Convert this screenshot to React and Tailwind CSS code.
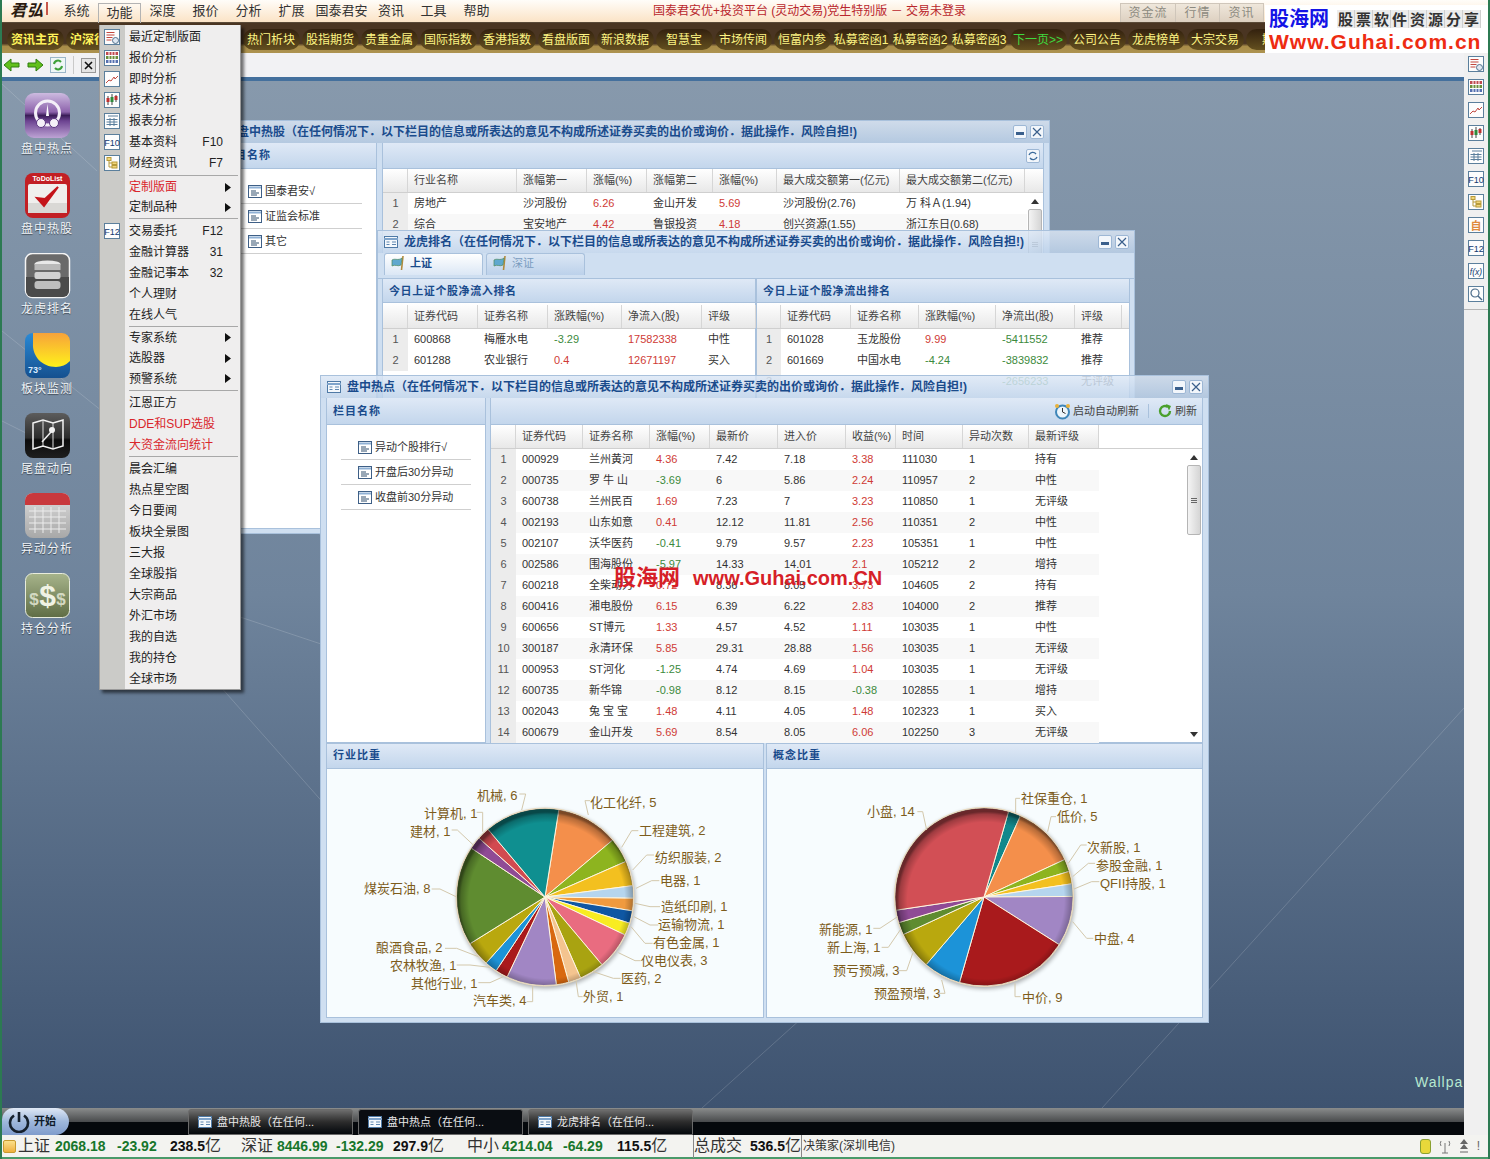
import React from 'react';

const navItems = ['资讯主页', '沪深行情', '', '', '热门析块', '股指期货', '贵重金属', '国际指数', '香港指数', '看盘版面', '新浪数据', '智慧宝', '市场传闻', '恒富内参', '私募密函1', '私募密函2', '私募密函3', '下一页>>', '公司公告', '龙虎榜单', '大宗交易', '期货'];

const hotRows = [
  ['000929', '兰州黄河', '4.36', '7.42', '7.18', '3.38', '111030', '1', '持有'],
  ['000735', '罗 牛 山', '-3.69', '6', '5.86', '2.24', '110957', '2', '中性'],
  ['600738', '兰州民百', '1.69', '7.23', '7', '3.23', '110850', '1', '无评级'],
  ['002193', '山东如意', '0.41', '12.12', '11.81', '2.56', '110351', '2', '中性'],
  ['002107', '沃华医药', '-0.41', '9.79', '9.57', '2.23', '105351', '1', '中性'],
  ['002586', '围海股份', '-5.97', '14.33', '14.01', '2.1', '105212', '2', '增持'],
  ['600218', '全柴动力', '0.72', '8.36', '8.05', '3.73', '104605', '2', '持有'],
  ['600416', '湘电股份', '6.15', '6.39', '6.22', '2.83', '104000', '2', '推荐'],
  ['600656', 'ST博元', '1.33', '4.57', '4.52', '1.11', '103035', '1', '中性'],
  ['300187', '永清环保', '5.85', '29.31', '28.88', '1.56', '103035', '1', '无评级'],
  ['000953', 'ST河化', '-1.25', '4.74', '4.69', '1.04', '103035', '1', '无评级'],
  ['600735', '新华锦', '-0.98', '8.12', '8.15', '-0.38', '102855', '1', '增持'],
  ['002043', '兔 宝 宝', '1.48', '4.11', '4.05', '1.48', '102323', '1', '买入'],
  ['600679', '金山开发', '5.69', '8.54', '8.05', '6.06', '102250', '3', '无评级'],
];

// 行业比重: value, colour, label, label x/y (page), leader points (zoom coords)
const industry = [
  [5, '#f48f4b', '化工化纤, 5', 590, 803, [775, 135, 765, 92, 780, 92]],
  [2, '#8db41f', '工程建筑, 2', 639, 831, [875, 232, 905, 182, 925, 182]],
  [2, '#f3c01f', '纺织服装, 2', 655, 858, [908, 300, 950, 255, 972, 255]],
  [1, '#b5d5ee', '电器, 1', 660, 881, [918, 355, 965, 332, 988, 332]],
  [1, '#ef9a3f', '造纸印刷, 1', 661, 907, [915, 400, 960, 410, 990, 410]],
  [1, '#0f57a3', '运输物流, 1', 658, 925, [912, 440, 960, 465, 985, 465]],
  [1, '#f8ec22', '有色金属, 1', 653, 943, [903, 470, 945, 520, 968, 520]],
  [3, '#e96c80', '仪电仪表, 3', 641, 961, [865, 548, 915, 572, 932, 572]],
  [2, '#a9a311', '医药, 2', 621, 979, [790, 605, 850, 625, 872, 625]],
  [1, '#f4c48f', '外贸, 1', 583, 997, [738, 632, 745, 680, 758, 680]],
  [1, '#d8680f', '', 0, 0, null],
  [4, '#a186c4', '汽车类, 4', 473, 1001, [608, 648, 608, 695, 590, 695]],
  [1, '#a91a1c', '其他行业, 1', 411, 984, [520, 620, 480, 638, 445, 638]],
  [1, '#1c93d8', '农林牧渔, 1', 390, 966, [480, 592, 420, 585, 380, 585]],
  [2, '#b9a80e', '酿酒食品, 2', 376, 948, [445, 560, 380, 535, 345, 535]],
  [8, '#5f8c30', '煤炭石油, 8', 364, 889, [378, 380, 330, 357, 305, 357]],
  [1, '#8f4b95', '建材, 1', 410, 832, [430, 225, 382, 180, 365, 180]],
  [1, '#d24a50', '计算机, 1', 424, 814, [458, 185, 458, 127, 440, 127]],
  [6, '#0f8f90', '机械, 6', 477, 796, [575, 120, 587, 72, 568, 72]],
];

const concept = [
  [1, '#11888c', '社保重仓, 1', 1021, 799, [737, 130, 737, 85, 750, 85]],
  [5, '#f48f4b', '低价, 5', 1057, 817, [833, 185, 843, 140, 858, 140]],
  [1, '#8db41f', '次新股, 1', 1087, 848, [895, 280, 932, 225, 950, 225]],
  [1, '#f3c01f', '参股金融, 1', 1096, 866, [908, 320, 955, 280, 975, 280]],
  [1, '#b5d5ee', 'QFII持股, 1', 1100, 884, [912, 357, 965, 335, 988, 335]],
  [4, '#a186c4', '中盘, 4', 1094, 939, [908, 455, 950, 505, 970, 505]],
  [9, '#a91a1c', '中价, 9', 1022, 998, [735, 640, 735, 680, 752, 680]],
  [3, '#1c93d8', '预盈预增, 3', 874, 994, [515, 630, 525, 670, 508, 670]],
  [3, '#b9a80e', '预亏预减, 3', 833, 971, [428, 550, 410, 602, 385, 602]],
  [1, '#5f8c30', '新上海, 1', 827, 948, [392, 478, 355, 532, 335, 532]],
  [1, '#8f4b95', '新能源, 1', 819, 930, [383, 440, 330, 475, 310, 475]],
  [14, '#d24f55', '小盘, 14', 867, 812, [470, 180, 458, 125, 442, 125]],
];

const Pie = ({ id, viewBox, cx, cy, r, start, data, ox, oy }) => {
  const total = data.reduce((s, d) => s + d[0], 0);
  let a = start;
  const pt = (deg) => [cx + r * Math.sin((deg * Math.PI) / 180), cy - r * Math.cos((deg * Math.PI) / 180)];
  return (
    <svg viewBox={viewBox} className="block w-full h-full">
      <defs>
        <radialGradient id={id} cx="0.51" cy="0.52" r="0.5">
          <stop offset="0.88" stopColor="#000" stopOpacity="0" />
          <stop offset="0.97" stopColor="#000" stopOpacity="0.25" />
          <stop offset="1" stopColor="#000" stopOpacity="0.5" />
        </radialGradient>
        <filter id={id + 'b'} x="-20%" y="-20%" width="140%" height="140%">
          <feGaussianBlur stdDeviation="2" />
        </filter>
      </defs>
      <circle cx={cx + 1} cy={cy + 2} r={r + 1} fill="#000" opacity="0.3" filter={`url(#${id}b)`} />
      {data.map((d, i) => {
        const sweep = (d[0] / total) * 360;
        const p1 = pt(a);
        const p2 = pt(a + sweep);
        const path = `M${cx} ${cy}L${p1[0]} ${p1[1]}A${r} ${r} 0 ${sweep > 180 ? 1 : 0} 1 ${p2[0]} ${p2[1]}Z`;
        a += sweep;
        return <path key={i} d={path} fill={d[1]} stroke="#fff6df" strokeWidth="1" />;
      })}
      <circle cx={cx} cy={cy} r={r} fill={`url(#${id})`} />
      <circle cx={cx} cy={cy} r={r + 0.5} fill="none" stroke="#ead9bb" strokeWidth="1" />
      {data.filter((d) => d[5]).map((d) => (
        <polyline
          key={d[2]}
          points={d[5].map((v, i) => (i % 2 ? oy + v / 3 : ox + v / 3)).join(' ')}
          fill="none"
          stroke="#d3c8ac"
          strokeWidth="1"
        />
      ))}
      {data.filter((d) => d[2]).map((d) => (
        <text key={d[2]} x={d[3]} y={d[4] + 1} fontSize="13" fill="#7d5c1c" dominantBaseline="middle">{d[2]}</text>
      ))}
    </svg>
  );
};

const BoxIcon = ({ kind }) => (
  <svg width="16" height="16" viewBox="0 0 16 16" className="shrink-0">
    <rect x="0.5" y="0.5" width="15" height="15" fill="#fdfdfd" stroke="#5b7f9c" />
    {kind === 'recent' && (
      <g>
        <path d="M2.5 3.5h8M2.5 6h8M2.5 8.5h6M2.5 11h5" stroke="#c2483f" />
        <circle cx="11.5" cy="11.5" r="3" fill="#dfe8f2" stroke="#52708c" />
      </g>
    )}
    {kind === 'grid' && (
      <g>
        <rect x="2" y="2" width="12" height="3" fill="#c04a50" />
        <rect x="2" y="6" width="12" height="3" fill="#6a8e3a" />
        <rect x="2" y="10" width="12" height="3" fill="#5570b0" />
        <path d="M5 2v11M8 2v11M11 2v11" stroke="#fff" />
      </g>
    )}
    {kind === 'line' && <path d="M2 12l3-3 2 1 3-4 1 2 3-3" stroke="#c2483f" fill="none" />}
    {kind === 'candle' && (
      <g>
        <path d="M4 4v9M8 2v11M12 3v7" stroke="#444" />
        <rect x="2.5" y="6" width="3" height="4" fill="#c03030" />
        <rect x="6.5" y="5" width="3" height="5" fill="#2f8a3a" />
        <rect x="10.5" y="4" width="3" height="4" fill="#c03030" />
      </g>
    )}
    {kind === 'report' && <path d="M2.5 6.5h11M2.5 9h11M2.5 11.5h11M6 5v8M10 5v8M4 3h10" stroke="#5b7f9c" fill="none" />}
    {kind === 'tree' && (
      <g>
        <rect x="3" y="2.5" width="4" height="3" fill="#f2d67a" stroke="#b79a3a" />
        <rect x="8" y="7" width="5" height="2.5" fill="#f2d67a" stroke="#b79a3a" />
        <rect x="8" y="10.5" width="5" height="2.5" fill="#f2d67a" stroke="#b79a3a" />
        <path d="M5 5.5v6.5h3M5 8h3" stroke="#b79a3a" fill="none" />
      </g>
    )}
    {kind === 'self' && <text x="8" y="12.5" textAnchor="middle" fontSize="11" fontWeight="700" fill="#e08a3c">自</text>}
    {kind === 'f10' && <text x="8" y="11.5" textAnchor="middle" fontSize="9" fill="#123a70">F10</text>}
    {kind === 'f12' && <text x="8" y="11.5" textAnchor="middle" fontSize="9" fill="#123a70">F12</text>}
    {kind === 'fx' && <text x="8" y="11.5" textAnchor="middle" fontSize="8.5" fontStyle="italic" fill="#123a70">f(x)</text>}
    {kind === 'search' && (
      <g>
        <circle cx="7" cy="7" r="4" fill="none" stroke="#4a6a88" strokeWidth="1.2" />
        <path d="M10 10l4 4" stroke="#4a6a88" strokeWidth="1.5" />
      </g>
    )}
  </svg>
);

const Arrow = ({ flip }) => (
  <svg width="17" height="14" viewBox="0 0 17 14">
    <path
      d={flip ? 'M1 5h8V1l7 6-7 6V9H1z' : 'M16 5H8V1L1 7l7 6V9h8z'}
      fill="#62c01c"
      stroke="#2f7d10"
    />
  </svg>
);

const WinIcon = () => (
  <svg width="14" height="12" viewBox="0 0 14 12" className="shrink-0">
    <rect x="0.5" y="0.5" width="13" height="11" fill="#f4f8fc" stroke="#4f7aa6" />
    <path d="M0 3h14" stroke="#7fa4cb" strokeWidth="2" />
    <path d="M2.5 6h3M8 6h4M2.5 8.5h3M8 8.5h4" stroke="#5f87b0" />
  </svg>
);

const ListIcon = () => (
  <svg width="14" height="13" viewBox="0 0 14 13" className="shrink-0">
    <rect x="0.5" y="0.5" width="13" height="12" fill="#fff" stroke="#3e5f86" />
    <path d="M1 2.5h12" stroke="#8fb0d4" strokeWidth="2" />
    <path d="M3 6h5M3 8h8M3 10h6" stroke="#33506f" />
  </svg>
);

const Flag = () => (
  <svg width="16" height="16" viewBox="0 0 16 16" className="shrink-0">
    <path d="M12 1l-1.5 14" stroke="#b08a3c" strokeWidth="1.6" />
    <path d="M1 5c3-2 6 1 10-2l-1 7c-3 2-6-1-9 1z" fill="#5fa8cf" stroke="#4f8a5a" strokeWidth="0.7" />
  </svg>
);

const WinButtons = () => (
  <div className="flex gap-[3px]">
    <div className="w-[14px] h-[14px] rounded-[2px] border border-[#9db7d5] bg-[#f2f6fb] flex items-end justify-center pb-[3px]">
      <div className="w-[8px] h-[3px] bg-[#3a5f8c]" />
    </div>
    <div className="w-[14px] h-[14px] rounded-[2px] border border-[#9db7d5] bg-[#f2f6fb] flex items-center justify-center">
      <svg width="10" height="10" viewBox="0 0 10 10"><path d="M1 1l8 8M9 1L1 9" stroke="#3a5f8c" strokeWidth="1.2" /></svg>
    </div>
  </div>
);

const TitleBar = ({ title }) => (
  <div className="h-[22px] shrink-0 flex items-center pl-[6px] pr-[5px] bg-gradient-to-b from-[#dce7f5]/85 to-[#bdd2ea]/85">
    <WinIcon />
    <div className="ml-[6px] pb-px text-[12px] font-bold text-[#1a4b8c] whitespace-nowrap overflow-hidden flex-1">{title}</div>
    <WinButtons />
  </div>
);

const panelHead = 'bg-gradient-to-b from-[#dfe9f6] to-[#c3d6ec] border-b border-[#a9c1dc]';

const ListPanel = ({ items, headH }) => (
  <div className="flex flex-col bg-white border border-[#a9c1dc] border-t-0 h-full">
    <div className={`${headH} shrink-0 flex items-center pl-[6px] text-[11px] font-bold text-[#1a4b8c] tracking-[1px] ${panelHead}`}>栏目名称</div>
    <div className="flex flex-col pt-[10px] mx-[14px]">
      {items.map((t) => (
        <div key={t} className="h-[25px] shrink-0 flex items-center gap-[3px] pl-[17px] border-b border-[#cfcfcf] text-[11px] text-[#333] whitespace-nowrap">
          <ListIcon />
          <span>{t}</span>
        </div>
      ))}
    </div>
  </div>
);

const th = 'flex items-center pl-[6px] border-r border-[#d6d6d6] text-[11px] text-[#444] whitespace-nowrap overflow-hidden';
const td = 'flex items-center pl-[6px] text-[11px] whitespace-nowrap overflow-hidden';
const headBg = 'bg-gradient-to-b from-[#ffffff] to-[#e8e8e8] border-b border-[#cfcfcf]';

const pct = (v) => (v.startsWith('-') ? 'text-[#3c8a3c]' : 'text-[#cf3b36]');

const ScrollBar = ({ thumb = 'h-[70px]' }) => (
  <div className="w-[16px] shrink-0 flex flex-col items-center pt-[6px]">
    <svg width="8" height="5" viewBox="0 0 8 5"><path d="M4 0l4 5H0z" fill="#333" /></svg>
    <div className={`mt-[5px] w-[14px] ${thumb} rounded-[2px] border border-[#b5b5b5] bg-gradient-to-r from-[#f4f4f4] to-[#d5d5d5] flex flex-col items-center justify-center gap-[1px]`}>
      <div className="w-[6px] h-px bg-[#666]" />
      <div className="w-[6px] h-px bg-[#666]" />
      <div className="w-[6px] h-px bg-[#666]" />
    </div>
    <div className="flex-1" />
    <svg width="8" height="5" viewBox="0 0 8 5" className="mb-[5px]"><path d="M4 5l4-5H0z" fill="#333" /></svg>
  </div>
);

const IdxCell = ({ n }) => (
  <div className="flex items-center justify-center bg-[#ececec] text-[11px] text-[#555]">{n}</div>
);

const HotWindow = () => (
  <div className="absolute left-[320px] top-[375px] w-[889px] h-[648px] flex flex-col border border-[#a9c1dc] z-30">
    <TitleBar title="盘中热点（在任何情况下．以下栏目的信息或所表达的意见不构成所述证券买卖的出价或询价．据此操作．风险自担!)" />
    <div className="h-[345px] shrink-0 flex gap-[4px] px-[5px] bg-[#cfdff1]">
      <div className="w-[160px] shrink-0">
        <ListPanel headH="h-[27px]" items={['异动个股排行√', '开盘后30分异动', '收盘前30分异动']} />
      </div>
      <div className="flex-1 flex flex-col bg-white border border-[#a9c1dc] border-t-0">
        <div className={`h-[27px] shrink-0 flex items-center justify-end pr-[5px] text-[11px] text-[#444] ${panelHead}`}>
          <svg width="17" height="17" viewBox="0 0 17 17">
            <circle cx="8.5" cy="9" r="6.5" fill="#eef6fb" stroke="#3f86b8" strokeWidth="2" />
            <path d="M8.5 5v4l3 1.5" stroke="#333" fill="none" />
            <circle cx="3" cy="3" r="2" fill="#e8b23c" />
            <circle cx="14" cy="3" r="2" fill="#e8b23c" />
          </svg>
          <span className="ml-[2px]">启动自动刷新</span>
          <div className="w-px h-[14px] bg-[#a9c1dc] mx-[9px]" />
          <svg width="14" height="14" viewBox="0 0 14 14">
            <path d="M12 7a5 5 0 1 1-2-4" fill="none" stroke="#4aa02c" strokeWidth="2.4" />
            <path d="M8 0l5 2-2 4.5z" fill="#4aa02c" />
          </svg>
          <span className="ml-[3px]">刷新</span>
        </div>
        <div className="flex-1 flex min-h-0">
          <div className="w-[608px] shrink-0 flex flex-col">
            <div className={`h-[24px] shrink-0 grid grid-cols-[25px_67px_67px_60px_68px_68px_50px_67px_66px_70px] ${headBg}`}>
              <div className={th} />
              {['证券代码', '证券名称', '涨幅(%)', '最新价', '进入价', '收益(%)', '时间', '异动次数', '最新评级'].map((h) => (
                <div key={h} className={th}>{h}</div>
              ))}
            </div>
            {hotRows.map((r, i) => (
              <div key={r[0] + i} className={`h-[21px] shrink-0 grid grid-cols-[25px_67px_67px_60px_68px_68px_50px_67px_66px_70px] text-[#333] ${i % 2 ? 'bg-[#f8f8f8]' : 'bg-white'}`}>
                <IdxCell n={i + 1} />
                <div className={td}>{r[0]}</div>
                <div className={td}>{r[1]}</div>
                <div className={`${td} ${pct(r[2])}`}>{r[2]}</div>
                <div className={td}>{r[3]}</div>
                <div className={td}>{r[4]}</div>
                <div className={`${td} ${pct(r[5])}`}>{r[5]}</div>
                <div className={td}>{r[6]}</div>
                <div className={td}>{r[7]}</div>
                <div className={td}>{r[8]}</div>
              </div>
            ))}
          </div>
          <div className="flex-1 flex flex-col">
            <div className="h-[24px] shrink-0 border-b border-[#cfcfcf]" />
            <div className="flex-1 flex justify-end min-h-0">
              <ScrollBar />
            </div>
          </div>
        </div>
      </div>
    </div>
    <div className="flex-1 flex gap-[2px] px-[5px] pb-[4px] min-h-0 bg-[#cfdff1]">
      <div className="w-[438px] shrink-0 flex flex-col border border-[#a9c1dc]">
        <div className={`h-[25px] shrink-0 flex items-center pb-[2px] pl-[6px] text-[11px] font-bold text-[#1a4b8c] tracking-[1px] ${panelHead}`}>行业比重</div>
        <div className="flex-1 min-h-0 bg-[#f7fcfe]">
          <Pie id="pieA" viewBox="327 769 436 248" cx={545} cy={897} r={88.5} start={9} data={industry} ox={330} oy={770} />
        </div>
      </div>
      <div className="flex-1 flex flex-col border border-[#a9c1dc]">
        <div className={`h-[25px] shrink-0 flex items-center pb-[2px] pl-[6px] text-[11px] font-bold text-[#1a4b8c] tracking-[1px] ${panelHead}`}>概念比重</div>
        <div className="flex-1 min-h-0 bg-[#f7fcfe]">
          <Pie id="pieB" viewBox="767 769 435 248" cx={984} cy={897} r={89} start={16} data={concept} ox={770} oy={770} />
        </div>
      </div>
    </div>
  </div>
);

const stockRows = [
  ['房地产', '沙河股份', '6.26', '金山开发', '5.69', '沙河股份(2.76)', '万 科Ａ(1.94)'],
  ['综合', '宝安地产', '4.42', '鲁银投资', '4.18', '创兴资源(1.55)', '浙江东日(0.68)'],
];

const StockWindow = () => (
  <div className="absolute left-[210px] top-[120px] w-[840px] h-[414px] flex flex-col border border-[#a9c1dc] z-10">
    <TitleBar title="盘中热股（在任何情况下．以下栏目的信息或所表达的意见不构成所述证券买卖的出价或询价．据此操作．风险自担!)" />
    <div className="flex-1 flex gap-[5px] px-[5px] pb-[4px] min-h-0 bg-[#cfdff1]">
      <div className="w-[161px] shrink-0">
        <ListPanel headH="h-[26px]" items={['国泰君安√', '证监会标准', '其它']} />
      </div>
      <div className="flex-1 flex flex-col bg-white border border-[#a9c1dc] border-t-0">
        <div className={`h-[26px] shrink-0 flex items-center justify-end pr-[3px] ${panelHead}`}>
          <div className="w-[14px] h-[14px] rounded-[2px] border border-[#9db7d5] bg-[#f2f6fb] flex items-center justify-center">
            <svg width="10" height="10" viewBox="0 0 10 10"><path d="M1 4a4 4 0 0 1 7-1M9 6a4 4 0 0 1-7 1" fill="none" stroke="#3a6a9c" strokeWidth="1.3" /></svg>
          </div>
        </div>
        <div className={`h-[24px] shrink-0 grid grid-cols-[25px_109px_70px_60px_66px_64px_123px_125px_1fr] ${headBg}`}>
          <div className={th} />
          {['行业名称', '涨幅第一', '涨幅(%)', '涨幅第二', '涨幅(%)', '最大成交额第一(亿元)', '最大成交额第二(亿元)'].map((h, i) => (
            <div key={i} className={th}>{h}</div>
          ))}
        </div>
        <div className="flex-1 flex min-h-0">
          <div className="flex-1 flex flex-col">
            {stockRows.map((r, i) => (
              <div key={i} className={`h-[21px] shrink-0 grid grid-cols-[25px_109px_70px_60px_66px_64px_123px_125px] text-[#333] ${i % 2 ? 'bg-[#f8f8f8]' : 'bg-white'}`}>
                <IdxCell n={i + 1} />
                <div className={td}>{r[0]}</div>
                <div className={td}>{r[1]}</div>
                <div className={`${td} text-[#cf3b36]`}>{r[2]}</div>
                <div className={td}>{r[3]}</div>
                <div className={`${td} text-[#cf3b36]`}>{r[4]}</div>
                <div className={td}>{r[5]}</div>
                <div className={td}>{r[6]}</div>
              </div>
            ))}
          </div>
          <ScrollBar />
        </div>
      </div>
    </div>
  </div>
);

const dragonLeft = [
  ['600868', '梅雁水电', '-3.29', '17582338', '中性'],
  ['601288', '农业银行', '0.4', '12671197', '买入'],
];
const dragonRight = [
  ['601028', '玉龙股份', '9.99', '-5411552', '推荐'],
  ['601669', '中国水电', '-4.24', '-3839832', '推荐'],
  ['', '', '', '-2656233', '无评级'],
];

const DragonTable = ({ head, col, rows, cols }) => (
  <div className="flex-1 flex flex-col bg-white border border-[#a9c1dc] border-t-0 min-w-0">
    <div className={`h-[24px] shrink-0 flex items-center pl-[6px] pt-[2px] text-[11px] font-bold text-[#1a4b8c] tracking-[0.6px] ${panelHead}`}>{head}</div>
    <div className={`h-[26px] shrink-0 grid ${cols} pt-[2px] ${headBg}`}>
      <div className={th} />
      {['证券代码', '证券名称', '涨跌幅(%)', col, '评级'].map((h) => (
        <div key={h} className={th}>{h}</div>
      ))}
    </div>
    {rows.map((r, i) => (
      <div key={i} className={`h-[21px] shrink-0 grid ${cols} text-[#333]`}>
        <IdxCell n={i + 1} />
        <div className={td}>{r[0]}</div>
        <div className={td}>{r[1]}</div>
        <div className={`${td} ${pct(r[2])}`}>{r[2]}</div>
        <div className={`${td} ${pct(r[3])}`}>{r[3]}</div>
        <div className={td}>{r[4]}</div>
      </div>
    ))}
  </div>
);

const DragonWindow = () => (
  <div className="absolute left-[377px] top-[230px] w-[758px] h-[300px] flex flex-col border border-[#a9c1dc] z-20">
    <TitleBar title="龙虎排名（在任何情况下．以下栏目的信息或所表达的意见不构成所述证券买卖的出价或询价．据此操作．风险自担!)" />
    <div className="h-[26px] shrink-0 flex items-start gap-[3px] pl-[6px] bg-[#cfdff1] border-b border-[#a9c1dc]">
      <div className="w-[99px] h-[22px] flex items-center gap-[3px] pl-[6px] pb-[3px] rounded-t-[3px] border border-b-0 border-[#a9c1dc] bg-gradient-to-b from-[#ffffff] to-[#dbe7f5] text-[11px] font-bold text-[#1a4b8c]">
        <Flag />上证
      </div>
      <div className="w-[99px] h-[22px] flex items-center gap-[3px] pl-[6px] pb-[3px] rounded-t-[3px] border border-b-0 border-[#a9c1dc] bg-gradient-to-b from-[#dbe7f5] to-[#bcd1ea] text-[11px] text-[#7a9cc0]">
        <Flag />深证
      </div>
    </div>
    <div className="flex-1 flex px-[4px] min-h-0 bg-[#cfdff1]">
      <DragonTable head="今日上证个股净流入排名" col="净流入(股)" rows={dragonLeft} cols="grid-cols-[25px_70px_70px_74px_80px_54px]" />
      <DragonTable head="今日上证个股净流出排名" col="净流出(股)" rows={dragonRight} cols="grid-cols-[24px_70px_68px_77px_79px_47px]" />
    </div>
  </div>
);

const Sep = ({ h }) => (
  <div className={`${h} flex items-center pl-[29px] pr-[2px]`}>
    <div className="h-px w-full bg-[#a8a8a8]" />
  </div>
);

const MenuRow = ({ text, icon, keys, sub, red, h = 'h-[21px]' }) => (
  <div className={`${h} flex items-center ${red ? 'text-[#d9262c]' : 'text-[#222]'}`}>
    <div className="w-[25px] shrink-0 pl-[4px]">{icon && <BoxIcon kind={icon} />}</div>
    <span className="pl-[4px] whitespace-nowrap">{text}</span>
    <span className="ml-auto pr-[17px]">{keys}</span>
    {sub && (
      <svg width="6" height="9" viewBox="0 0 6 9" className="mr-[9px]"><path d="M0 0l6 4.5L0 9z" fill="#111" /></svg>
    )}
  </div>
);

const FuncMenu = () => (
  <div className="absolute left-[99px] top-[25px] w-[142px] h-[665px] z-40 pt-px text-[12px] border border-[#9a9a9a] border-t-0 bg-[linear-gradient(90deg,#cbcbc8_25px,#efeeee_25px)] shadow-[3px_3px_3px_rgba(0,0,0,0.55)]">
    <MenuRow text="最近定制版面" icon="recent" />
    <MenuRow text="报价分析" icon="grid" />
    <MenuRow text="即时分析" icon="line" />
    <MenuRow text="技术分析" icon="candle" />
    <MenuRow text="报表分析" icon="report" />
    <MenuRow text="基本资料" icon="f10" keys="F10" />
    <MenuRow text="财经资讯" icon="tree" keys="F7" />
    <Sep h="h-[4px]" />
    <MenuRow text="定制版面" red sub h="h-[20px]" />
    <MenuRow text="定制品种" sub h="h-[20px]" />
    <Sep h="h-[3px]" />
    <MenuRow text="交易委托" icon="f12" keys="F12" />
    <MenuRow text="金融计算器" keys="31" />
    <MenuRow text="金融记事本" keys="32" />
    <MenuRow text="个人理财" />
    <MenuRow text="在线人气" />
    <Sep h="h-[2px]" />
    <MenuRow text="专家系统" sub />
    <MenuRow text="选股器" sub h="h-[20px]" />
    <MenuRow text="预警系统" sub />
    <Sep h="h-[3px]" />
    <MenuRow text="江恩正方" />
    <MenuRow text="DDE和SUP选股" red />
    <MenuRow text="大资金流向统计" red />
    <Sep h="h-[3px]" />
    {['晨会汇编', '热点星空图', '今日要闻', '板块全景图', '三大报', '全球股指', '大宗商品', '外汇市场', '我的自选', '我的持仓', '全球市场'].map((t) => (
      <MenuRow key={t} text={t} />
    ))}
  </div>
);

const DeskIcon = ({ label, children }) => (
  <div className="h-[80px] flex flex-col items-center">
    <svg width="47" height="46" viewBox="0 0 47 46">{children}</svg>
    <span className="mt-[2px] text-[12px] tracking-[1px] leading-[16px] text-[#f0f4f8] [text-shadow:0_1px_1px_rgba(0,0,0,0.5)]">{label}</span>
  </div>
);

const DeskIcons = () => (
  <div className="relative w-[90px] flex flex-col pt-[12px]">
    <DeskIcon label="盘中热点">
      <defs>
        <linearGradient id="d1" x1="0" y1="0" x2="0" y2="1">
          <stop offset="0" stopColor="#cdbbe0" />
          <stop offset="0.42" stopColor="#8d63ac" />
          <stop offset="0.5" stopColor="#3b1d58" />
          <stop offset="0.62" stopColor="#6c4391" />
          <stop offset="1" stopColor="#bda3d4" />
        </linearGradient>
      </defs>
      <rect x="1" y="0" width="45" height="45" rx="9" fill="url(#d1)" />
      <circle cx="23.5" cy="20" r="12" fill="none" stroke="#f4f0f8" strokeWidth="3" />
      <path d="M23.5 11l1.5 12h-3z" fill="#fff" />
      <circle cx="17" cy="30" r="4.5" fill="#f4f0f8" stroke="#5a3580" />
      <circle cx="30" cy="30" r="4.5" fill="#f4f0f8" stroke="#5a3580" />
    </DeskIcon>
    <DeskIcon label="盘中热股">
      <rect x="1" y="0" width="45" height="45" rx="8" fill="#c21f24" />
      <rect x="4" y="11" width="39" height="29" rx="2" fill="#f0efed" />
      <path d="M4 30h39v10H4z" fill="#d9d8d5" />
      <text x="23.5" y="8" textAnchor="middle" fontSize="7" fontWeight="700" fill="#fff">ToDoList</text>
      <path d="M13 25l7 8 14-19-13 12z" fill="#c4141a" stroke="#c4141a" strokeWidth="2" />
    </DeskIcon>
    <DeskIcon label="龙虎排名">
      <rect x="1.5" y="0.5" width="44" height="44" rx="7" fill="#6a6a6a" stroke="#f4f4f4" strokeWidth="1.5" />
      <path d="M2 24h43v14a6 6 0 0 1-6 6H8a6 6 0 0 1-6-6z" fill="#4a4a4a" />
      <ellipse cx="23.5" cy="11" rx="13" ry="3.5" fill="#e8e8e8" />
      <rect x="10.5" y="11" width="26" height="6" fill="#b9b9b9" />
      <rect x="10.5" y="19" width="26" height="7" rx="2" fill="#d2d2d2" />
      <rect x="10.5" y="28" width="26" height="8" rx="3" fill="#bebebe" />
    </DeskIcon>
    <DeskIcon label="板块监测">
      <defs>
        <linearGradient id="d4" x1="0" y1="0" x2="0" y2="1">
          <stop offset="0" stopColor="#2a8ad6" />
          <stop offset="1" stopColor="#15508f" />
        </linearGradient>
        <linearGradient id="d4s" x1="0" y1="0" x2="0" y2="1">
          <stop offset="0" stopColor="#f7a23a" />
          <stop offset="1" stopColor="#fff21a" />
        </linearGradient>
      </defs>
      <rect x="1" y="0" width="45" height="45" rx="8" fill="url(#d4)" />
      <path d="M9 0h29a8 8 0 0 1 8 8v20a20 20 0 0 1-14 6C18 34 8 23 9 10z" fill="url(#d4s)" />
      <text x="4" y="40" fontSize="9" fontWeight="700" fill="#dcecff">73°</text>
    </DeskIcon>
    <DeskIcon label="尾盘动向">
      <defs>
        <linearGradient id="d5" x1="0" y1="0" x2="0" y2="1">
          <stop offset="0" stopColor="#5c5c5c" />
          <stop offset="0.55" stopColor="#2c2c2c" />
          <stop offset="0.6" stopColor="#0c0c0c" />
          <stop offset="1" stopColor="#1e1e1e" />
        </linearGradient>
      </defs>
      <rect x="1" y="0" width="45" height="45" rx="8" fill="url(#d5)" />
      <path d="M9 10l10-3 10 3 10-3v26l-10 3-10-3-10 3z" fill="none" stroke="#f2f2f2" strokeWidth="1.5" />
      <path d="M19 7v26M29 10v26" stroke="#e0e0e0" />
      <path d="M18 29l9-10" stroke="#f2f2f2" strokeWidth="1.5" />
      <circle cx="28" cy="17" r="3" fill="#f2f2f2" />
    </DeskIcon>
    <DeskIcon label="异动分析">
      <defs>
        <linearGradient id="d6" x1="0" y1="0" x2="0" y2="1">
          <stop offset="0" stopColor="#dcdcdc" />
          <stop offset="1" stopColor="#a8a8a8" />
        </linearGradient>
      </defs>
      <rect x="1" y="0" width="45" height="45" rx="8" fill="url(#d6)" />
      <path d="M1 12V8a8 8 0 0 1 8-8h29a8 8 0 0 1 8 8v4z" fill="#c8383c" />
      <path d="M5 18h37M5 24h37M5 30h37M5 36h37M11 14v26M19 14v26M27 14v26M35 14v26" stroke="#ececec" />
    </DeskIcon>
    <DeskIcon label="持仓分析">
      <defs>
        <linearGradient id="d7" x1="0" y1="0" x2="0" y2="1">
          <stop offset="0" stopColor="#a7b48b" />
          <stop offset="1" stopColor="#5f6d45" />
        </linearGradient>
      </defs>
      <rect x="1.5" y="0.5" width="44" height="44" rx="7" fill="url(#d7)" stroke="#e8ecdc" />
      <text x="23.5" y="33" textAnchor="middle" fontSize="30" fontWeight="700" fill="#f0f2e4">$</text>
      <text x="10" y="32" textAnchor="middle" fontSize="17" fontWeight="700" fill="#d4d9c2">$</text>
      <text x="37" y="32" textAnchor="middle" fontSize="17" fontWeight="700" fill="#d4d9c2">$</text>
    </DeskIcon>
  </div>
);

const TaskBtn = ({ text, active }) => (
  <div className={`w-[165px] h-[26px] shrink-0 flex items-center pl-[9px] gap-[5px] rounded-t-[3px] border border-[#6a6a6a] text-[11px] text-[#e8e8e8] whitespace-nowrap ${active ? 'bg-[#0a0d12]' : 'bg-gradient-to-b from-[#6e6e6e] via-[#2c2c2c] to-[#05080c]'}`}>
    <WinIcon />
    <span>{text}</span>
  </div>
);

const sideIcons = ['recent', 'grid', 'line', 'candle', 'report', 'f10', 'tree', 'self', 'f12', 'fx', 'search'];

const num = 'text-[14px] font-bold text-[#17762b] whitespace-nowrap';
const vol = 'text-[14px] font-bold text-[#111] whitespace-nowrap';
const big = 'font-normal text-[16px] text-[#333]';
const lab = 'text-[16px] text-[#333] whitespace-nowrap';

export default function App() {
  return (
    <div className="relative w-[1490px] h-[1159px] overflow-hidden flex bg-[#f2f2f4] font-['Liberation_Sans','Noto_Sans_CJK_SC',sans-serif]">
      <div className="w-[2px] shrink-0 bg-[#2c7a52]" />
      <div className="flex-1 flex flex-col min-w-0">
        {/* menu bar */}
        <div className="h-[23px] shrink-0 flex items-center border-b border-[#5a4a38] bg-gradient-to-b from-[#fffdf9] to-[#fbe3c6] text-[13px] text-[#333]">
          <div className="relative w-[53px] shrink-0 pl-[8px] italic font-bold text-[#2b1a10] text-[16px] tracking-[1px] whitespace-nowrap font-['Liberation_Serif','Noto_Sans_CJK_SC',serif]">
            君弘
            <div className="absolute left-[44px] top-[3px] w-[2px] h-[13px] bg-[#c8574a]" />
          </div>
          <div className="w-[43px] text-center">系统</div>
          <div className="w-[43px] h-[20px] mt-[3px] flex items-center justify-center border border-b-0 border-[#b3b3b3]">功能</div>
          <div className="w-[43px] text-center">深度</div>
          <div className="w-[43px] text-center">报价</div>
          <div className="w-[43px] text-center">分析</div>
          <div className="w-[43px] text-center">扩展</div>
          <div className="w-[57px] text-center whitespace-nowrap">国泰君安</div>
          <div className="w-[42px] text-center">资讯</div>
          <div className="w-[43px] text-center">工具</div>
          <div className="w-[43px] text-center">帮助</div>
          <div className="ml-[155px] text-[12px] text-[#b9262d] whitespace-nowrap">国泰君安优+投资平台 (灵动交易)党生特别版 － 交易未登录</div>
          <div className="ml-auto mr-[224px] h-[19px] mt-[3px] flex text-[12px] text-[#8c8a80]">
            <div className="w-[56px] flex items-center justify-center border border-b-0 border-[#cfc6ba] bg-gradient-to-b from-[#efe7db] to-[#ddd0c0] tracking-[1px]">资金流</div>
            <div className="w-[44px] flex items-center justify-center border border-b-0 border-l-0 border-[#cfc6ba] bg-gradient-to-b from-[#efe7db] to-[#ddd0c0] tracking-[1px]">行情</div>
            <div className="w-[44px] flex items-center justify-center border border-b-0 border-l-0 border-[#cfc6ba] bg-gradient-to-b from-[#efe7db] to-[#ddd0c0] tracking-[1px]">资讯</div>
          </div>
        </div>
        {/* gold nav */}
        <div className="h-[30px] shrink-0 flex items-center pl-[3.5px] overflow-hidden pt-[3px] bg-[linear-gradient(180deg,#4a3522_0%,#4a3522_68%,#a88c48_78%,#ad9350_100%)]">
          {navItems.map((t, i) => (
            <div key={i} className="w-[59px] h-[21px] shrink-0 px-[1px]">
              <div className={`h-full rounded-full flex items-center justify-center whitespace-nowrap bg-gradient-to-b from-[#33210e] to-[#64501f] text-[12px] ${i < 2 ? 'font-bold text-[#fff35a]' : i === 17 ? 'text-[#3fd93f]' : 'text-[#fdf483]'}`}>{t}</div>
            </div>
          ))}
        </div>
        {/* middle */}
        <div className="flex-1 flex min-h-0">
          <div className="flex-1 flex flex-col min-w-0">
            <div className="h-[24px] shrink-0 flex items-center pl-[1px]">
              <Arrow />
              <div className="w-[7px]" />
              <Arrow flip />
              <div className="ml-[6px] w-[16px] h-[16px] border border-[#9bb6c9] bg-[#eef6f6] flex items-center justify-center">
                <svg width="12" height="12" viewBox="0 0 12 12"><path d="M2 5a4 4 0 0 1 7-2M10 7a4 4 0 0 1-7 2" fill="none" stroke="#3da13a" strokeWidth="2" /></svg>
              </div>
              <div className="ml-[7px] w-px h-[18px] bg-[#c9c9c9]" />
              <div className="ml-[7px] w-[15px] h-[15px] border border-[#9a9a9a] bg-[#e4e4e4] flex items-center justify-center">
                <svg width="9" height="9" viewBox="0 0 9 9"><path d="M1 1l7 7M8 1L1 8" stroke="#111" strokeWidth="1.6" /></svg>
              </div>
            </div>
            <div className="h-[4px] shrink-0 bg-[#44709d]" />
            <div className="relative flex-1 min-h-0 overflow-hidden bg-gradient-to-b from-[#8799ac] via-[#6f849c] to-[#3e5370]">
              <svg className="absolute inset-0 w-full h-full" viewBox="0 0 1462 1027">
                <g stroke="#fff" strokeOpacity="0.16" fill="none">
                  <path d="M0 3L95 90M0 250l100 80M0 340l60 30" />
                  <path d="M125 500l230 260M145 505l180 60M290 415l80 110M700 1027l200-180M1100 1027l362-400" />
                </g>
              </svg>
              <DeskIcons />
              <div className="absolute left-[1413px] top-[991px] whitespace-nowrap text-[14px] tracking-[1px] text-[#b6e8d0]">Wallpa</div>
            </div>
            <div className="relative h-[27px] shrink-0 flex items-end bg-[linear-gradient(180deg,#8a8c8c_0%,#4a4c4e_50%,#05080c_52%,#05080c_100%)]">
              <div className="w-[67px] h-[27px] flex items-center gap-[4px] pl-[6px] rounded-r-[16px] rounded-tl-[14px] bg-gradient-to-b from-[#dfe8f5] via-[#9fb8dc] to-[#7f9ccc]">
                <svg width="22" height="22" viewBox="0 0 22 22">
                  <path d="M6 4.5a9 9 0 1 0 10 0" fill="none" stroke="#15202c" strokeWidth="2.6" />
                  <path d="M11 1v10" stroke="#15202c" strokeWidth="2.6" />
                </svg>
                <span className="text-[11px] font-bold text-[#0e1a28]">开始</span>
              </div>
              <div className="ml-[119px] flex gap-[5px]">
                <TaskBtn text="盘中热股（在任何..." />
                <TaskBtn text="盘中热点（在任何..." active />
                <TaskBtn text="龙虎排名（在任何..." />
              </div>
            </div>
          </div>
          <div className="relative w-[24px] shrink-0 flex flex-col items-center pt-[3px] gap-[7px] bg-[#f0f0f0]">
            {sideIcons.map((k) => <BoxIcon key={k} kind={k} />)}
            <div className="w-full h-px bg-[#b5b5b5]" />
          </div>
        </div>
        {/* status bar */}
        <div className="h-[24px] shrink-0 flex items-center border-b-2 border-[#4a9a6a] bg-[#f3f3f0]">
          <div className="ml-[1px] w-[13px] h-[13px] rounded-[2px] border border-[#c89a30] bg-gradient-to-b from-[#fbe08a] to-[#eeb03c]" />
          <span className={`ml-[2px] w-[32px] ${lab}`}>上证</span>
          <span className={`ml-[5px] w-[62px] ${num}`}>2068.18</span>
          <span className={`w-[53px] ${num}`}>-23.92</span>
          <span className={`w-[71px] ${vol}`}>238.5<span className={big}>亿</span></span>
          <span className={`w-[36px] ${lab}`}>深证</span>
          <span className={`w-[59px] ${num}`}>8446.99</span>
          <span className={`w-[57px] ${num}`}>-132.29</span>
          <span className={`w-[74px] ${vol}`}>297.9<span className={big}>亿</span></span>
          <span className={`w-[35px] ${lab}`}>中小</span>
          <span className={`w-[61px] ${num}`}>4214.04</span>
          <span className={`w-[54px] ${num}`}>-64.29</span>
          <span className={`w-[76px] ${vol}`}>115.5<span className={big}>亿</span></span>
          <span className={`w-[57px] border-l border-[#888] ${lab}`}>总成交</span>
          <span className={`w-[52px] border-r border-[#888] ${vol}`}>536.5<span className={big}>亿</span></span>
          <span className="ml-[1px] text-[12px] text-[#333] whitespace-nowrap">决策家(深圳电信)</span>
          <div className="ml-auto mr-[8px] flex items-center gap-[8px]">
            <div className="w-[11px] h-[15px] rounded-[3px] bg-[#e8d83a] border border-[#8aa030]" />
            <svg width="12" height="16" viewBox="0 0 12 16"><path d="M6 5v10M3 15h6M2 3a5 5 0 0 0 0 5M10 3a5 5 0 0 1 0 5" stroke="#777" fill="none" /></svg>
            <svg width="10" height="14" viewBox="0 0 10 14"><path d="M5 0l4 5H1zM5 5l4 5H1z" fill="#666" /><path d="M1 13h8" stroke="#666" /></svg>
            <span className="text-[12px] text-[#666]">!</span>
          </div>
        </div>
      </div>
      <div className="w-[2px] shrink-0 bg-[#2c7a52]" />

      {/* floating windows */}
      <StockWindow />
      <DragonWindow />
      <HotWindow />
      <FuncMenu />

      {/* watermarks */}
      <div className="absolute left-[614px] top-[561px] z-50 flex items-baseline gap-[13px] font-bold text-[#d61f28] whitespace-nowrap">
        <span className="text-[22px]">股海网</span>
        <span className="text-[20px]">www.Guhai.com.CN</span>
      </div>
      <div className="absolute left-[1265px] top-[5px] w-[223px] h-[48px] z-50 bg-white pl-[4px] overflow-hidden">
        <div className="flex items-center h-[26px] pt-[2px]">
          <span className="w-[68px] text-[20px] font-bold text-[#1414e6] whitespace-nowrap">股海网</span>
          <div className="flex">
            {'股票软件资源分享'.split('').map((c, i) => (
              <span key={i} className="w-[18px] h-[18px] flex items-center justify-center bg-[#ececec] text-[15px] font-bold leading-none text-[#333] border-r border-[#cfcfcf]">{c}</span>
            ))}
          </div>
        </div>
        <div className="text-[21px] font-bold leading-[22px] tracking-[1px] text-[#ee2c12] whitespace-nowrap">Www.Guhai.com.cn</div>
      </div>
    </div>
  );
}
